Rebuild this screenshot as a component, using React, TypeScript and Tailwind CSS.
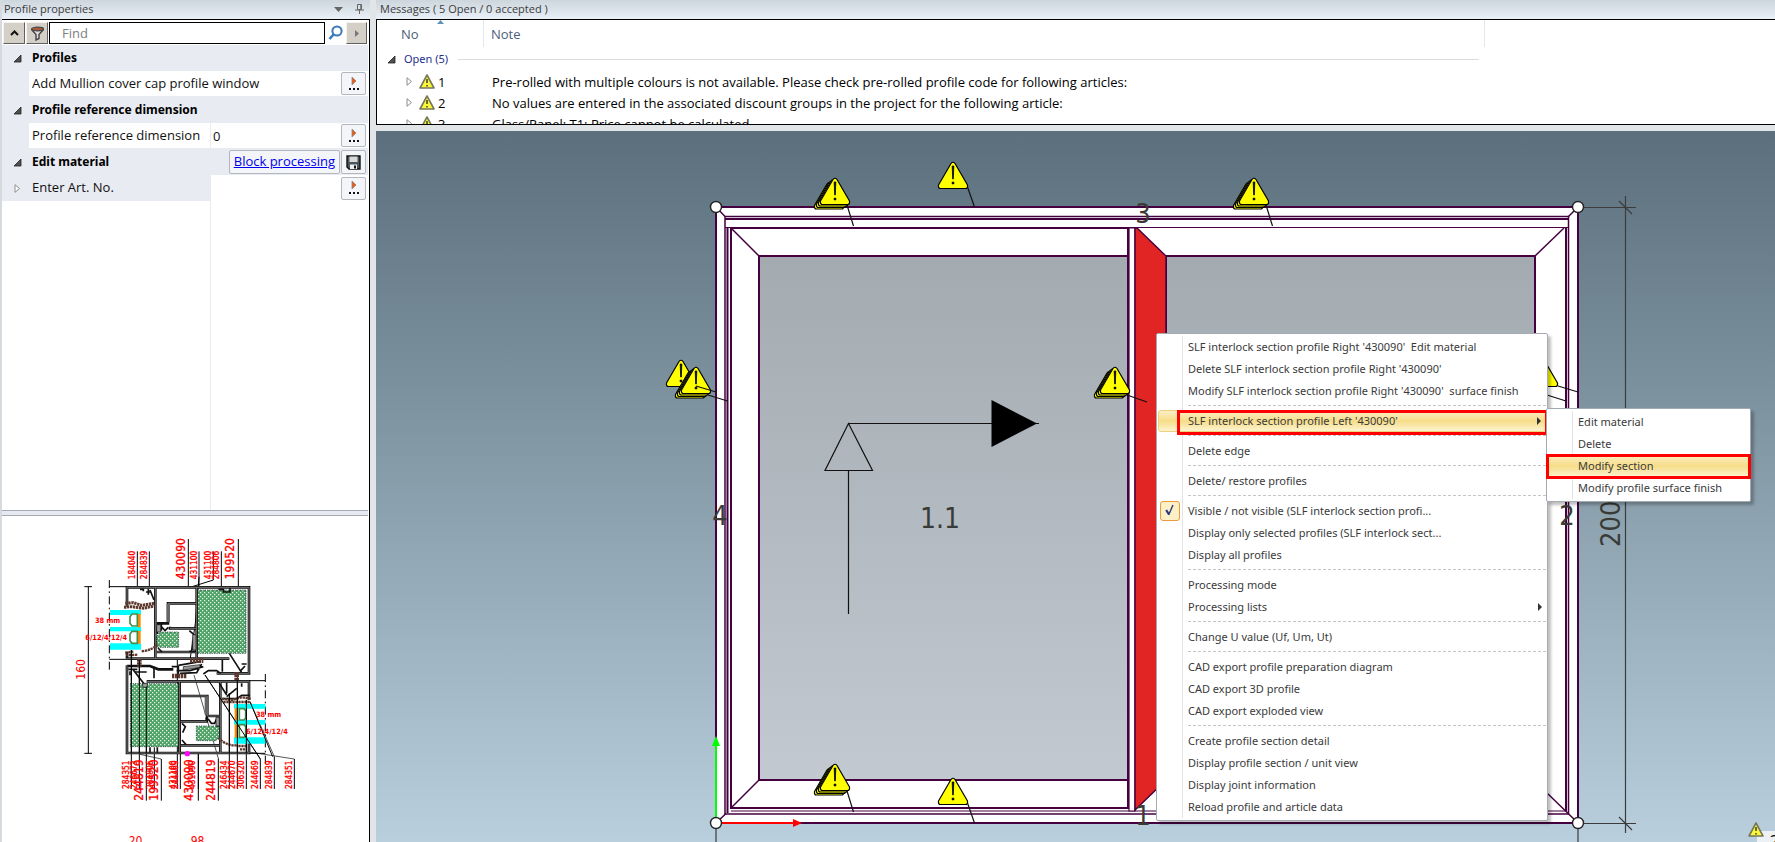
import { useState } from "react";

type MenuEntry = {
  label: string;
  arrow?: boolean;
  active?: boolean;
  check?: boolean;
};

const menuGroups: MenuEntry[][] = [
  [
    { label: "SLF interlock section profile Right '430090'  Edit material" },
    { label: "Delete SLF interlock section profile Right '430090'" },
    { label: "Modify SLF interlock section profile Right '430090'  surface finish" },
  ],
  [{ label: "SLF interlock section profile Left '430090'", arrow: true, active: true }],
  [{ label: "Delete edge" }],
  [{ label: "Delete/ restore profiles" }],
  [
    { label: "Visible / not visible (SLF interlock section profi...", check: true },
    { label: "Display only selected profiles (SLF interlock sect..." },
    { label: "Display all profiles" },
  ],
  [{ label: "Processing mode" }, { label: "Processing lists", arrow: true }],
  [{ label: "Change U value (Uf, Um, Ut)" }],
  [
    { label: "CAD export profile preparation diagram" },
    { label: "CAD export 3D profile" },
    { label: "CAD export exploded view" },
  ],
  [
    { label: "Create profile section detail" },
    { label: "Display profile section / unit view" },
    { label: "Display joint information" },
    { label: "Reload profile and article data" },
  ],
];

const subMenu: MenuEntry[] = [
  { label: "Edit material" },
  { label: "Delete" },
  { label: "Modify section", active: true },
  { label: "Modify profile surface finish" },
];

const messages = [
  { no: 1, note: "Pre-rolled with multiple colours is not available. Please check pre-rolled profile code for following articles:" },
  { no: 2, note: "No values are entered in the associated discount groups in the project for the following article:" },
  { no: 3, note: "Glass/Panel: T1: Price cannot be calculated" },
];

// x = baseline, y = start of the rotated text, line = leader line
const topLabels = [
  { text: "184040", x: 256, y: 208, size: 25, line: 262, from: 124 },
  { text: "284839", x: 292, y: 208, size: 25, line: 298, from: 124 },
  { text: "430090", x: 405, y: 208, size: 36, line: 415, from: 87 },
  { text: "431100", x: 441, y: 208, size: 25, line: 447, from: 124 },
  { text: "431100", x: 483, y: 208, size: 25, line: 490, from: 124 },
  { text: "284806", x: 508, y: 208, size: 25, line: 514, from: 124 },
  { text: "199520", x: 553, y: 208, size: 36, line: 565, from: 87 },
];

const bottomLabels = [
  { text: "284351", x: 238, size: 25, line: 244, from: 420 },
  { text: "246673", x: 262, size: 25, line: 268, from: 470 },
  { text: "244819", x: 280, size: 36, line: 289, from: 530 },
  { text: "284806", x: 308, size: 25, line: 313, from: 712 },
  { text: "199520", x: 324, size: 36, line: 334, from: 747 },
  { text: "431100", x: 377, size: 25, line: 382, from: 448 },
  { text: "244469", x: 385, size: 25, line: 391, from: 510 },
  { text: "430090", x: 430, size: 36, line: 445, from: 730 },
  { text: "431090", x: 434, size: 25, line: 445, from: 730 },
  { text: "244819", x: 495, size: 36, line: 505, from: 745 },
  { text: "246434", x: 531, size: 25, line: 538, from: 550 },
  { text: "244670", x: 556, size: 25, line: 562, from: 500 },
  { text: "306320", x: 582, size: 25, line: 589, from: 570 },
  { text: "244669", x: 624, size: 25, line: 631, from: 747 },
  { text: "284839", x: 666, size: 25, line: 673, from: 740 },
  { text: "284351", x: 725, size: 25, line: 733, from: 747 },
];

function SmallWarning({ className }: { className?: string }) {
  return (
    <svg width="16" height="15" viewBox="0 0 16 15" className={className}>
      <path d="M8 1 L15 14 H1 Z" fill="#fbf83c" stroke="#77775c" strokeWidth="1.6" strokeLinejoin="round" />
      <path d="M8 5 V9 M8 11 V12.4" stroke="#4a4a20" strokeWidth="1.6" />
    </svg>
  );
}

function Expander({ open }: { open?: boolean }) {
  return (
    <svg width="9" height="9" viewBox="0 0 9 9" className="shrink-0">
      {open ? (
        <path d="M8 1 V8 H1 Z" fill="#505050" stroke="#222" strokeWidth="0.8" />
      ) : (
        <path d="M2 0.7 L6.5 4.5 L2 8.3 Z" fill="#fff" stroke="#8c8c8c" />
      )}
    </svg>
  );
}

function MoreButton({ label }: { label: string }) {
  return (
    <button
      aria-label={label}
      className="flex h-[23px] w-[25px] shrink-0 items-center justify-center rounded-[2px] border border-[#b4b8be] bg-[#f3f5f8]"
    >
      <svg width="12" height="14" viewBox="0 0 12 14">
        <path d="M4 0 L8 4 L4 8 Z" fill="#f05a10" stroke="#8a8a8a" strokeWidth="0.8" />
        <path d="M1 11 h2 v2 h-2 z M5 11 h2 v2 h-2 z M9 11 h2 v2 h-2 z" fill="#111" />
      </svg>
    </button>
  );
}

/* ---------- left column ---------- */

function GroupRow({ title, children }: { title: string; children?: React.ReactNode }) {
  return (
    <div className="flex h-[26px] items-center bg-[#e8ebf1] pr-[2px]">
      <span className="flex w-[30px] justify-center">
        <Expander open />
      </span>
      <h2 className="flex-1 font-['Noto_Sans',sans-serif] text-xs font-bold text-black">{title}</h2>
      {children}
    </div>
  );
}

function SectionDrawing() {
  return (
    <svg viewBox="0 18 960 978" className="ml-12 block h-[326px] w-80 shrink-0" fontFamily="'DejaVu Sans Condensed', 'DejaVu Sans', sans-serif">
      <defs>
        <pattern id="foam" width="12" height="12" patternUnits="userSpaceOnUse">
          <rect width="12" height="12" fill="#4fa265" />
          <path d="M0 0h4v4h-4z M6 6h4v4h-4z" fill="#e8f5ea" />
        </pattern>
      </defs>

      {/* leaders */}
      <g stroke="#000" strokeWidth="3" fill="none">
        {topLabels.map((l) => (
          <path key={l.line} d={`M${l.line} ${l.from} V${l.line === 490 ? 210 : 232}`} />
        ))}
        {bottomLabels.map((l) => (
          <path key={l.text + l.x} d={`M${l.line} ${l.from} V${l.size > 30 ? 872 : 837}`} />
        ))}
        <path d="M490 210 L420 232 M447 200 L436 340 L420 450" />
        <path d="M432 495 L505 745 M465 495 L631 747 M600 575 L673 740 M597 726 L733 747 M270 733 L334 747" strokeWidth="2" />
        <path d="M115 230 V730 M103 230 H126 M103 730 H126" />
        <path d="M178 210 V480" strokeDasharray="24 10 5 10" />
        <path d="M646 492 V772" strokeDasharray="24 10 5 10" />
        <path d="M178 230 H232 M178 448 H232 M590 512 H646 M597 730 H646" />
      </g>

      {/* foam cores */}
      <g fill="url(#foam)" stroke="#123" strokeWidth="2" strokeDasharray="4 3">
        <path d="M443 240 H588 V430 H443 Z" />
        <path d="M330 366 H386 V412 H320 V380 Z" />
        <path d="M241 521 H386 V710 H241 Z" />
        <path d="M439 648 H508 V680 L498 692 H439 Z" />
      </g>

      {/* profile walls */}
      <g fill="none" stroke="#111" strokeWidth="8" strokeLinejoin="miter">
        <path d="M231 290 V232 H597 V490 H500" />
        <path d="M316 232 V446 M440 232 V446 M231 446 H538 M231 425 V446" />
        <path d="M320 340 H354 V280 H438 M360 350 V355 H438 M320 426 H438" />
        <path d="M231 466 V729 H597 V690 M231 468 H300 L325 478 H370" />
        <path d="M290 514 H597 V570 M388 514 V728 M511 514 V728" />
        <path d="M392 558 H472 V618 H508 M392 634 H470 V622 M392 706 H508" />
        <path d="M517 448 V485 M312 470 V505 M538 430 L575 488 M250 480 L285 525" strokeWidth="5" />
      </g>
      <g fill="none" stroke="#777" strokeWidth="3">
        <path d="M231 290 V232 H597 V490 H500 M316 232 V446 M440 232 V446 M231 446 H538" />
        <path d="M231 466 V729 H597 V690 M290 514 H597 V570 M388 514 V728 M511 514 V728" />
        <path d="M354 336 V280 H438 M360 355 H438 M320 426 H438 M392 558 H472 V618 H508 M392 634 H470 M392 706 H508" />
      </g>
      <path d="M350 282 h10 v54 h-10 z M464 560 h10 v54 h-10 z" fill="#666" />

      {/* clips and beads */}
      <g fill="none" stroke="#111" strokeWidth="5">
        <path d="M270 238 H280 V244 M288 246 H302 M295 236 V254 M300 240 L312 270 M505 238 H520 V246 H540 V234" />
        <path d="M322 344 H334 V360 H322 M334 350 L345 362 L355 352 M322 372 V350 M324 414 L336 426 M418 362 L432 374 V388 M428 392 V420 M418 424 H438" />
        <path d="M396 640 L406 650 L398 668 M396 690 L408 704 M474 626 L484 640 H494 L500 626 M504 632 V650 M508 520 L530 555 M530 518 V550" />
        <path d="M520 566 H560 L575 556 H600 M575 520 V530 M530 560 L560 535 M235 478 H262 M240 484 V496 M255 486 H290 M300 712 V728 M322 712 V728" />
        <path d="M385 466 L450 455 M380 482 H420 L460 470 M390 490 L440 488 L455 462 M460 492 L475 482 H500 L512 490 M365 470 H385 V500 M575 462 H590 M570 484 L585 468" />
      </g>
      <g fill="#999" stroke="#111" strokeWidth="2">
        <path d="M428 374 h10 v46 h-10 z M278 520 h14 v12 h-14 z M320 344 h12 v22 h-12 z M498 622 h10 v26 h-10 z M400 470 l50 -6 v8 l-50 8 z" />
      </g>

      {/* gaskets */}
      <g fill="none" stroke="#5b372c" strokeWidth="9" strokeDasharray="7 2">
        <path d="M226 280 L250 278 L275 286 L312 280 M222 292 L245 290 L280 295 L312 288" />
        <path d="M226 428 L250 425 M228 436 L262 434 M275 424 Q310 420 322 402" strokeWidth="7" />
        <path d="M268 448 V472 M560 486 V510 M420 452 H460 M366 498 H410" strokeWidth="14" />
        <path d="M516 566 L545 570 L575 562 L602 566 M520 576 L600 576 M505 684 Q530 708 560 706 M565 708 H592 M570 718 H590" strokeWidth="7" />
      </g>

      {/* glazing */}
      <g fill="#00ffff">
        <path d="M180 300h93v15h-93z M180 351h93v13h-93z M180 400h93v19h-93z" />
        <path d="M552 582h94v14h-94z M552 630h94v14h-94z M552 682h94v19h-94z" />
      </g>
      <path d="M263 312h9v40h-9z M263 363h9v38h-9z M554 595h9v36h-9z M554 643h9v40h-9z" fill="#ff8c00" />
      <g fill="#fff" stroke="#3f8f4c" strokeWidth="5">
        <path d="M246 312 H262 V348 H246 L240 340 V320 Z M246 364 H262 V400 H246 L240 392 V372 Z" />
        <path d="M568 596 H582 L587 602 V624 L582 630 H568 Z M568 644 H582 L587 650 V676 L582 682 H568 Z" />
      </g>
      <path d="M244 420 V730 M268 450 V730 M289 530 V730 M562 510 V730 M589 570 V730 M538 550 V730 M465 495 L631 747 M600 575 L668 740" stroke="#000" strokeWidth="3" />
      <circle cx="412" cy="731" r="8" fill="#f0f" />

      <g fill="#f00" stroke="#f00" strokeWidth="1">
        {topLabels.map((l) => (
          <text key={l.x} transform={`translate(${l.x} ${l.y}) rotate(-90)`} fontSize={l.size}>
            {l.text}
          </text>
        ))}
        {bottomLabels.map((l) => (
          <text key={l.x} transform={`translate(${l.x} ${l.size > 30 ? 872 : 837}) rotate(-90)`} fontSize={l.size}>
            {l.text}
          </text>
        ))}
      </g>
      <g fill="#f00">
        <text transform="translate(104 509) rotate(-90)" fontSize="36">160</text>
        <g fontSize="22" fontWeight="bold">
          <text x="135" y="339">38 mm</text>
          <text x="106" y="389">6/12/4/12/4</text>
          <text x="618" y="621">38 mm</text>
          <text x="588" y="671">6/12/4/12/4</text>
        </g>
        <text x="236" y="1004" fontSize="36">20</text>
        <text x="422" y="1004" fontSize="36">98</text>
      </g>
    </svg>
  );
}

function ProfilePanel() {
  const [query, setQuery] = useState("");

  return (
    <aside className="flex w-[370px] shrink-0 flex-col border-l-2 border-[#d5dade]">
      <header className="flex h-[19px] shrink-0 items-center bg-linear-to-b from-[#ccd6dc] to-[#eaf0f8] pl-[2px] text-[11px] text-[#3b3b3b]">
        <h1 className="flex-1">Profile properties</h1>
        <button aria-label="Panel menu" className="mr-3">
          <svg width="9" height="5" viewBox="0 0 9 5"><path d="M0 0H9L4.5 5Z" fill="#666" /></svg>
        </button>
        <button aria-label="Pin panel" className="mr-[6px]">
          <svg width="9" height="11" viewBox="0 0 9 11"><path d="M2.5 0.5H6.5V5.5H2.5ZM5.8 0.5V6M0 6H9M4.5 6V10" fill="none" stroke="#666" /></svg>
        </button>
      </header>

      <div className="flex flex-1 flex-col border-t border-r border-black bg-white pr-px">
        <div className="flex h-[25px] shrink-0 items-start gap-[1px] pt-[2px] pr-px pl-[1px]">
          <button aria-label="Collapse" className="flex h-[22px] w-[22px] items-center justify-center border border-[#f4f2ee] border-r-[#606060] border-b-[#606060] bg-[#d4d0c8]">
            <svg width="9" height="6" viewBox="0 0 9 6"><path d="M1 5 L4.5 1.5 L8 5" fill="none" stroke="#111" strokeWidth="2" /></svg>
          </button>
          <button aria-label="Filter" className="flex h-[22px] w-[22px] items-center justify-center border border-[#f4f2ee] border-r-[#606060] border-b-[#606060] bg-[#d4d0c8]">
            <svg width="15" height="15" viewBox="0 0 15 15">
              <path d="M1.5 3.5 L6 8.5 V14 L9 12.5 V8.5 L13.5 3.5" fill="#ddd" stroke="#444" strokeWidth="1.4" />
              <ellipse cx="7.5" cy="3" rx="6" ry="1.8" fill="#a85a3a" stroke="#444" strokeWidth="1.2" />
            </svg>
          </button>
          <input
            aria-label="Find"
            placeholder="Find"
            value={query}
            onChange={(e) => setQuery(e.target.value)}
            className="h-[22px] min-w-0 flex-1 border border-black bg-white pl-3 text-[13px] text-black placeholder:text-[#808080]"
          />
          <button aria-label="Search" className="flex h-[22px] w-[19px] items-center justify-center">
            <svg width="15" height="16" viewBox="0 0 15 16">
              <circle cx="9" cy="6" r="4.6" fill="#fff" stroke="#3b79b8" strokeWidth="2" />
              <path d="M5.5 9.5 L1.5 14" stroke="#3b79b8" strokeWidth="2.6" />
            </svg>
          </button>
          <button aria-label="Next" className="flex h-[22px] w-[21px] items-center justify-center border border-[#f4f2ee] border-r-[#606060] border-b-[#606060] bg-[#d4d0c8]">
            <svg width="4" height="7" viewBox="0 0 4 7"><path d="M0 0 L4 3.5 L0 7Z" fill="#777" /></svg>
          </button>
        </div>

        <div className="text-[13px] text-[#111]">
          <GroupRow title="Profiles" />
          <div className="flex h-[26px] items-center border-b border-[#e8ebf1] pr-[2px]">
            <span className="h-full w-[27px] bg-[#e8ebf1]" />
            <span className="flex-1 pl-[3px]">Add Mullion cover cap profile window</span>
            <MoreButton label="Add Mullion cover cap" />
          </div>
          <GroupRow title="Profile reference dimension" />
          <div className="flex h-[26px] items-center border-b border-[#e8ebf1] pr-[2px]">
            <span className="h-full w-[27px] bg-[#e8ebf1]" />
            <label htmlFor="refdim" className="flex h-full w-[182px] items-center border-r border-[#e8ebf1] pl-[3px]">
              Profile reference dimension
            </label>
            <input id="refdim" defaultValue="0" className="h-full min-w-0 flex-1 pl-[2px]" />
            <MoreButton label="Edit reference dimension" />
          </div>
          <GroupRow title="Edit material">
            <a href="#block" className="mr-[1px] flex h-6 items-center rounded-[2px] border border-[#b4b8be] bg-[#f3f5f8] px-1 text-[#0000ee] underline">
              Block processing
            </a>
            <button aria-label="Save" className="flex h-6 w-[25px] items-center justify-center rounded-[2px] border border-[#b4b8be] bg-[#f3f5f8]">
              <svg width="15" height="15" viewBox="0 0 15 15">
                <path d="M1 1H14V14H3L1 12Z" fill="#4a5560" stroke="#111" strokeWidth="1.4" />
                <path d="M3.5 1.5H11.5V7H3.5Z" fill="#d8d8d8" />
                <path d="M4 9.5H11V14H4Z" fill="#eee" />
                <path d="M8 10.5H10V13.5H8Z" fill="#111" />
              </svg>
            </button>
          </GroupRow>
          <div className="flex h-[26px] items-center pr-[2px]">
            <label htmlFor="artno" className="flex h-full w-[209px] items-center bg-[#e8ebf1]">
              <span className="flex w-[30px] justify-center">
                <Expander />
              </span>
              Enter Art. No.
            </label>
            <input id="artno" className="h-full min-w-0 flex-1 pl-[2px]" />
            <MoreButton label="Choose article" />
          </div>
        </div>

        <div className="flex flex-1">
          <div className="w-[209px] border-r border-[#e8ebf1]" />
        </div>

        <div className="h-[6px] shrink-0 border-y border-[#a4aab6] bg-[#e6e9f0]" />
        <SectionDrawing />
      </div>
    </aside>
  );
}

/* ---------- messages ---------- */

function MessagePanel() {
  return (
    <section className="shrink-0">
      <header className="flex h-[19px] items-center bg-linear-to-b from-[#ccd6dc] to-[#eaf0f8] pl-1 text-[11px] text-[#3b3b3b]">
        Messages ( 5 Open / 0 accepted )
      </header>
      <div className="h-[106px] overflow-hidden border-y border-l border-black bg-white">
        <table className="w-full table-fixed border-separate border-spacing-0 text-left text-[13px] leading-4 text-black">
          <colgroup>
            <col className="w-[107px]" />
            <col className="w-[1001px]" />
            <col />
          </colgroup>
          <thead>
            <tr className="h-[27px] text-[#4c607a]">
              <th className="relative border-r border-[#e3e8f0] pl-6 font-normal">
                No
                <svg width="7" height="4" viewBox="0 0 7 4" className="absolute top-0 left-[60px]">
                  <path d="M3.5 0L7 4H0Z" fill="#5b93b8" />
                </svg>
              </th>
              <th className="border-r border-[#e3e8f0] pl-[7px] font-normal">Note</th>
              <th />
            </tr>
          </thead>
          <tbody>
            <tr className="h-6">
              <td colSpan={2} className="pr-[6px] font-['Noto_Sans',sans-serif] text-[11px] text-[#1e2f8c]">
                <div className="flex items-center gap-2 pl-[10px]">
                  <Expander open />
                  <span>Open (5)</span>
                  <span className="ml-[2px] h-px flex-1 bg-[#dcdcdc]" />
                </div>
              </td>
              <td />
            </tr>
            {messages.map((m) => (
              <tr key={m.no} className="h-[21px]">
                <td>
                  <div className="flex items-center pl-7">
                    <Expander />
                    <SmallWarning className="mr-[3px] mb-px ml-[5px]" />
                    {m.no}
                  </div>
                </td>
                <td className="pl-2 whitespace-nowrap">{m.note}</td>
                <td />
              </tr>
            ))}
          </tbody>
        </table>
      </div>
    </section>
  );
}

/* ---------- drawing area ---------- */

function WarningSign({ x, y, stack = 0 }: { x: number; y: number; stack?: number }) {
  const copies = Array.from({ length: stack + 1 }, (_, i) => stack - i);
  return (
    <g transform={`translate(${x} ${y})`} stroke="#000" strokeWidth="1.2" strokeLinejoin="round">
      {copies.map((i) => (
        <path
          key={i}
          transform={`translate(${i * -2} ${i * 1.5})`}
          d="M-2 1.5 Q0 -1 2 1.5 L14.5 23 Q15 26.5 12.5 26.5 H-12.5 Q-15 26.5 -14.5 23 Z"
          fill="#ffff00"
        />
      ))}
      <path d="M-0.8 4 H0.8 L0.3 17 H-0.3 Z" fill="#000" strokeWidth="0.8" />
      <circle cy="21" r="1" fill="#000" strokeWidth="1" />
    </g>
  );
}

function WindowDrawing() {
  return (
    <svg className="absolute inset-0 size-full">
      <defs>
        <linearGradient id="glass" x1="0" y1="256" x2="0" y2="780" gradientUnits="userSpaceOnUse">
          <stop offset="0" stopColor="#a3abb1" />
          <stop offset="1" stopColor="#c2c9d1" />
        </linearGradient>
      </defs>
      <g transform="translate(-376 -131)" fontFamily="'DejaVu Sans Condensed', 'DejaVu Sans', sans-serif">
        {/* outer frame */}
        <path d="M716 207 H1578 V823 H716 Z" fill="#fff" stroke="#45003f" strokeWidth="2" />
        <g fill="none" stroke="#45003f">
          <path d="M716 207 L725 216.5 M1578 207 L1568 217 M716 823 L726 813.5 M1578 823 L1547 793" strokeWidth="1.5" />
          <path d="M725 216.5 H1568.5 V814 H725 Z" strokeWidth="1.5" />
          <path d="M725 219 H1568" strokeWidth="2" />
          <path d="M725 227.5 H1568 M731 811 H1566" strokeWidth="1.2" />
          <path d="M727.5 228 V813 M1566 228 V811" strokeWidth="2" />
        </g>
        {/* sashes */}
        <path d="M731 228 H1128 V808 H731 Z" fill="#fff" stroke="#45003f" strokeWidth="2" />
        <path d="M731 228 L759 256 M731 808 L759 780" stroke="#45003f" strokeWidth="1.5" />
        <path d="M759 256 H1128 V780 H759 Z" fill="url(#glass)" stroke="#45003f" strokeWidth="2" />
        <path d="M1166 256 H1535 V780 H1166 Z" fill="url(#glass)" stroke="#45003f" strokeWidth="2" />
        <path d="M1535 256 L1564 228" stroke="#45003f" strokeWidth="1.5" />
        <path d="M1129 228 H1135 V811 H1129 Z" fill="#fff" stroke="#45003f" strokeWidth="1.2" />
        <path d="M1135 228 H1137 L1166 256 V780 L1135 810 Z" fill="#e12424" stroke="#45003f" strokeWidth="1.4" />

        {/* opening symbol */}
        <g fill="none" stroke="#111" strokeWidth="1.2">
          <path d="M848.5 614 V470.5 M848.5 423.5 L825 470.5 H872.5 Z M848.5 423.5 H1039" />
          <path d="M991.5 400 V447 L1037 423.5 Z" fill="#000" stroke="none" />
        </g>

        {/* dimension */}
        <g stroke="#3c3c3c" strokeWidth="1.2">
          <path d="M1625.5 196 V833 M1578 207.5 H1636 M1578 823.5 H1636 M1619 201 L1632 214 M1619 817 L1632 830 M716 823 V842 M1578 823 V842" />
        </g>

        <g fill="#3a3a36" fontSize="27">
          <text x="1143" y="223" textAnchor="middle">3</text>
          <text x="720" y="525" textAnchor="middle">4</text>
          <text x="1567" y="525" textAnchor="middle">2</text>
          <text x="1143" y="825" textAnchor="middle">1</text>
          <text x="940" y="528" textAnchor="middle" fontSize="28">1.1</text>
          <text transform="translate(1620 547) rotate(-90)">2000</text>
        </g>

        {/* axes */}
        <path d="M716 817 V745" stroke="#00ff00" strokeWidth="2" />
        <path d="M716 736 L720 746 H712 Z" fill="#00ff00" />
        <path d="M722 823 H794" stroke="#ff0000" strokeWidth="2" />
        <path d="M802 823 L793 819 V827 Z" fill="#ff0000" />
        <g fill="#fff" stroke="#222" strokeWidth="1.4">
          <circle cx="716" cy="207" r="5.5" />
          <circle cx="1578" cy="207" r="5.5" />
          <circle cx="716" cy="823" r="5.5" />
          <circle cx="1578" cy="823" r="5.5" />
        </g>

        {/* warnings with their leaders */}
        <WarningSign x={835} y={178} stack={3} />
        <WarningSign x={953} y={162} />
        <WarningSign x={1254} y={178} stack={3} />
        <WarningSign x={681} y={360} />
        <WarningSign x={696} y={367} stack={3} />
        <WarningSign x={1115} y={367} stack={3} />
        <WarningSign x={1543} y={360} />
        <WarningSign x={835} y={764} stack={3} />
        <WarningSign x={953} y={778} />
        <path
          d="M847 205 L853.5 226 M967.5 187 L974.5 207 M1266 205 L1272.5 226 M696 386 L716 392 M708 395 L727.5 401 M1127 395 L1147 402 M1558 386 L1578 392 M1547 395 L1566 401 M847 791 L853.5 812 M967.5 803 L974.5 823"
          stroke="#111"
          strokeWidth="1.2"
        />
      </g>
    </svg>
  );
}

function MenuArrow() {
  return (
    <svg width="4" height="8" viewBox="0 0 4 8" className="mr-1">
      <path d="M0 0L4 4L0 8Z" fill="#333" />
    </svg>
  );
}

function ContextMenu() {
  const [visible, setVisible] = useState(true);

  return (
    <div className="absolute top-[202px] left-[780px] w-[392px] rounded-[2px] border border-[#a5abb2] bg-white px-px py-[2px] text-[11px] text-[#3a3a3a] shadow-[3px_3px_3px_rgba(0,0,0,0.25)]">
      <div className="bg-[linear-gradient(#e2e4e7,#e2e4e7)] bg-[length:1px_100%] bg-[position:24px_0] bg-no-repeat">
        {menuGroups.map((group, g) => (
          <div key={g}>
            {g > 0 && (
              <div className="flex h-2 items-start pt-[3px] pl-[30px]">
                <hr className="flex-1 border-dashed border-[#c4c4c4]" />
              </div>
            )}
            {group.map((item) =>
              item.check ? (
                <label key={item.label} className="flex h-[22px] items-center pl-[2px]">
                  <span className="grid">
                    <input
                      type="checkbox"
                      checked={visible}
                      onChange={() => setVisible(!visible)}
                      className="col-start-1 row-start-1 size-5 appearance-none rounded-[3px] border border-[#ee9a3c] bg-[#fcf0c6]"
                    />
                    {visible && (
                      <svg width="20" height="20" viewBox="0 0 20 20" className="pointer-events-none col-start-1 row-start-1">
                        <path d="M6.2 9 L9 13.5" fill="none" stroke="#2b3a7c" strokeWidth="2.2" />
                        <path d="M8.6 14 L13 4" fill="none" stroke="#2b3a7c" strokeWidth="1.4" />
                      </svg>
                    )}
                  </span>
                  <span className="pl-2">{item.label}</span>
                </label>
              ) : (
                <button
                  key={item.label}
                  className={
                    item.active
                      ? "relative flex h-[22px] w-full items-center rounded-[3px] border border-[#ecd27a] bg-linear-to-b from-[#fbefc4] via-[#f6dd88] to-[#fdf3cf] pl-[29px] text-left whitespace-pre"
                      : "flex h-[22px] w-full items-center pl-[30px] text-left whitespace-pre"
                  }
                >
                  <span className="flex-1">{item.label}</span>
                  {item.arrow && <MenuArrow />}
                  {item.active && <span className="absolute -top-px -right-[3px] -bottom-1 left-[18px] border-3 border-[#ff0000]" />}
                </button>
              )
            )}
          </div>
        ))}
      </div>
    </div>
  );
}

function SubMenu() {
  return (
    <div className="absolute top-[277px] left-[1170px] w-[205px] rounded-[2px] border border-[#a5abb2] bg-white py-[2px] text-[11px] text-[#3a3a3a] shadow-[3px_3px_3px_rgba(0,0,0,0.25)]">
      <div className="bg-[linear-gradient(#e2e4e7,#e2e4e7)] bg-[length:1px_100%] bg-[position:25px_0] bg-no-repeat">
        {subMenu.map((item) => (
          <button
            key={item.label}
            className={
              item.active
                ? "relative flex h-[22px] w-full items-center bg-linear-to-b from-[#fbefc4] via-[#f6dd88] to-[#fdf3cf] pl-[31px] text-left"
                : "flex h-[22px] w-full items-center pl-[31px] text-left"
            }
          >
            {item.label}
            {item.active && <span className="absolute -inset-x-px -top-px -bottom-[2px] border-3 border-[#ff0000]" />}
          </button>
        ))}
      </div>
    </div>
  );
}

export default function App() {
  return (
    <main className="flex min-h-screen overflow-hidden bg-[#e1e5e8] font-['Noto_Sans',sans-serif]">
      <div className="flex font-['Open_Sans',sans-serif]">
        <ProfilePanel />
      </div>

      <div className="ml-[6px] flex min-w-0 flex-1 flex-col gap-[6px]">
        <div className="font-['Open_Sans',sans-serif]">
          <MessagePanel />
        </div>

        <section className="relative flex-1 overflow-hidden bg-linear-to-b from-[#5b707c] to-[#b9cfdd]">
          <WindowDrawing />
          <ContextMenu />
          <SubMenu />
          <div className="absolute right-0 bottom-0 flex items-end">
            <SmallWarning className="relative z-10 -mr-[7px] mb-[5px]" />
            <div className="flex h-[11px] w-[18px] items-start justify-end overflow-hidden bg-[#eef1f4] text-base leading-5 text-black">
              <span className="-mr-1">2</span>
            </div>
          </div>
        </section>
      </div>
    </main>
  );
}
